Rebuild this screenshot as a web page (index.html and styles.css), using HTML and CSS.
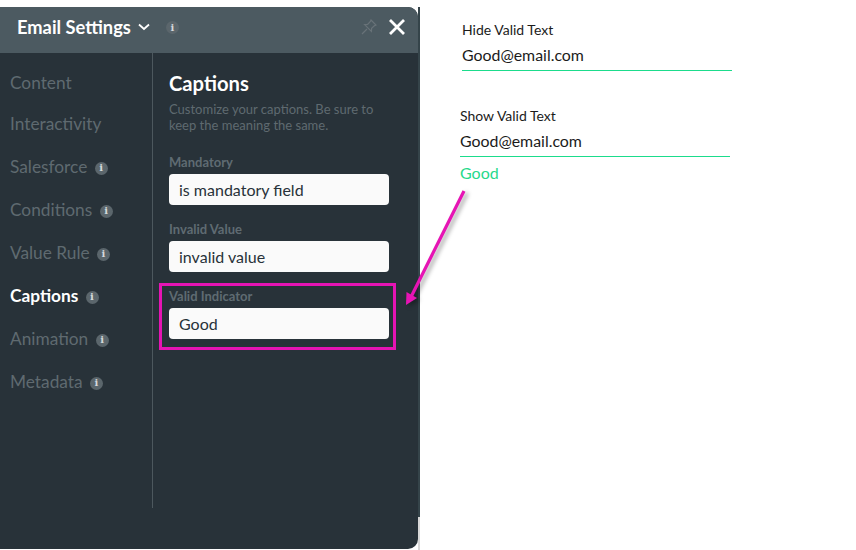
FILE: index.html
```html
<!DOCTYPE html>
<html lang="en">
<head>
    <meta charset="UTF-8">
    <meta name="viewport" content="width=device-width, initial-scale=1.0">
    <title>Email Settings</title>
    <link rel="stylesheet" href="styles.css">
</head>
<body>
    <div class="panel">
        <div class="panel-header">
            <span class="panel-title">Email Settings</span>
            <svg class="chevron" width="12" height="8" viewBox="0 0 12 8"><path d="M1 1.5 L6 6 L11 1.5" fill="none" stroke="#fff" stroke-width="1.8"/></svg>
            <span class="info header-info">i</span>
            <svg class="pin" width="16" height="16" viewBox="0 0 16 16"><path d="M10 1 L15 6 L13.6 6.6 L10.6 9.4 L10.4 12.4 L3.6 5.6 L6.6 5.4 L9.4 2.4 Z M6 10 L1 15" fill="none" stroke="#687278" stroke-width="1.2"/></svg>
            <svg class="close" width="16" height="16" viewBox="0 0 16 16"><path d="M1 1 L15 15 M15 1 L1 15" fill="none" stroke="#fff" stroke-width="2.8"/></svg>
        </div>
        <div class="panel-body">
            <ul class="side-nav">
                <li>Content</li>
                <li>Interactivity</li>
                <li>Salesforce <span class="info">i</span></li>
                <li>Conditions <span class="info">i</span></li>
                <li>Value Rule <span class="info">i</span></li>
                <li class="active">Captions <span class="info">i</span></li>
                <li>Animation <span class="info">i</span></li>
                <li>Metadata <span class="info">i</span></li>
            </ul>
            <div class="captions">
                <h2>Captions</h2>
                <p class="hint">Customize your captions. Be sure to keep the meaning the same.</p>
                <div class="field">
                    <label>Mandatory</label>
                    <div class="text-box">is mandatory field</div>
                </div>
                <div class="field">
                    <label>Invalid Value</label>
                    <div class="text-box">invalid value</div>
                </div>
                <div class="field highlighted">
                    <label>Valid Indicator</label>
                    <div class="text-box">Good</div>
                </div>
            </div>
        </div>
    </div>
    <div class="panel-edge"></div>

    <div class="preview">
        <div class="email-block first">
            <div class="email-label">Hide Valid Text</div>
            <div class="email-value">Good@email.com</div>
        </div>
        <div class="email-block second">
            <div class="email-label">Show Valid Text</div>
            <div class="email-value">Good@email.com</div>
            <div class="valid-text">Good</div>
        </div>
    </div>

    <svg class="arrow" width="70" height="125" viewBox="0 0 70 125">
        <path d="M59 2 L5 110" fill="none" stroke="#e614b4" stroke-width="3.2"/>
        <path d="M1 116 L1.5 103 L12 109 Z" fill="#e614b4"/>
    </svg>
</body>
</html>
```

FILE: styles.css
```css
body {
    margin: 0;
    height: 550px;
    overflow: hidden;
    display: flex;
    background: #fff;
    font-family: Lato, sans-serif;
}
.panel {
    width: 418px;
    height: 542px;
    margin-top: 7px;
    flex-shrink: 0;
    display: flex;
    flex-direction: column;
    background: #283239;
    border-radius: 0 10px 10px 0;
}
.panel-edge {
    width: 2px;
    height: 550px;
    flex-shrink: 0;
    background: linear-gradient(#fff 7px, #35444a 7px, #35444a 517px, #d8d8d8 517px);
}
.panel-header {
    height: 46px;
    display: flex;
    align-items: center;
    padding: 0 13px 6px 17px;
    box-sizing: border-box;
    background: #4c5a61;
    border-radius: 0 10px 0 0;
}
.panel-title {
    color: #fff;
    font-size: 18.3px;
    font-weight: 700;
}
.chevron {
    margin-left: 7px;
}
.header-info {
    margin-left: 16px;
}
.pin {
    margin-left: auto;
}
.close {
    margin-left: 12px;
}
.info {
    display: inline-flex;
    align-items: center;
    justify-content: center;
    width: 13px;
    height: 13px;
    border-radius: 50%;
    background: #5b666c;
    color: #d5d9db;
    font-family: "DejaVu Serif", serif;
    font-size: 10px;
    font-weight: 700;
    vertical-align: 2px;
}
.panel-body {
    display: flex;
    height: 455px;
}
.side-nav {
    list-style: none;
    margin: 0;
    padding: 19px 0 0 10px;
    width: 142px;
    border-right: 1px solid #4d585e;
    color: #5f6a70;
    font-size: 17.3px;
}
.side-nav li {
    height: 43px;
    line-height: 22px;
}
.side-nav li:first-child {
    height: 41px;
}
.side-nav li .info {
    margin-left: 3px;
}
.side-nav .active {
    color: #fff;
    font-weight: 700;
}
.captions {
    width: 220px;
    padding-left: 16px;
}
h2 {
    margin: 18px 0 6px;
    color: #fff;
    font-size: 20.2px;
    font-weight: 700;
    line-height: 24px;
}
.hint {
    margin: 0 0 21px;
    color: #5f6a70;
    font-size: 13px;
    line-height: 16px;
}
.field {
    margin-bottom: 16px;
}
.field label {
    display: block;
    margin-bottom: 4px;
    color: #5f6b72;
    font-size: 13px;
    font-weight: 700;
    line-height: 16px;
}
.text-box {
    height: 31px;
    padding-left: 10px;
    background: #fafafa;
    border-radius: 4px;
    color: #283239;
    font-size: 16px;
    line-height: 31px;
}
.highlighted {
    position: relative;
}
.highlighted::after {
    content: "";
    position: absolute;
    left: -10px;
    right: -7px;
    top: -5px;
    bottom: -11px;
    border: 3px solid #e614b4;
}
.preview {
    color: #1b1b1b;
}
.email-block {
    width: 270px;
}
.first {
    margin: 21px 0 0 42px;
}
.second {
    margin: 36px 0 0 40px;
}
.email-label {
    font-size: 14px;
    line-height: 17px;
}
.email-value {
    height: 30px;
    margin-top: 2px;
    border-bottom: 1px solid #1bdc8c;
    font-size: 15.9px;
    line-height: 30px;
}
.valid-text {
    margin-top: 7px;
    color: #27d98c;
    font-size: 16px;
    line-height: 18px;
}
.arrow {
    position: absolute;
    left: 405px;
    top: 189px;
    filter: drop-shadow(3px 2px 2px rgba(0, 0, 0, 0.35));
}
```
